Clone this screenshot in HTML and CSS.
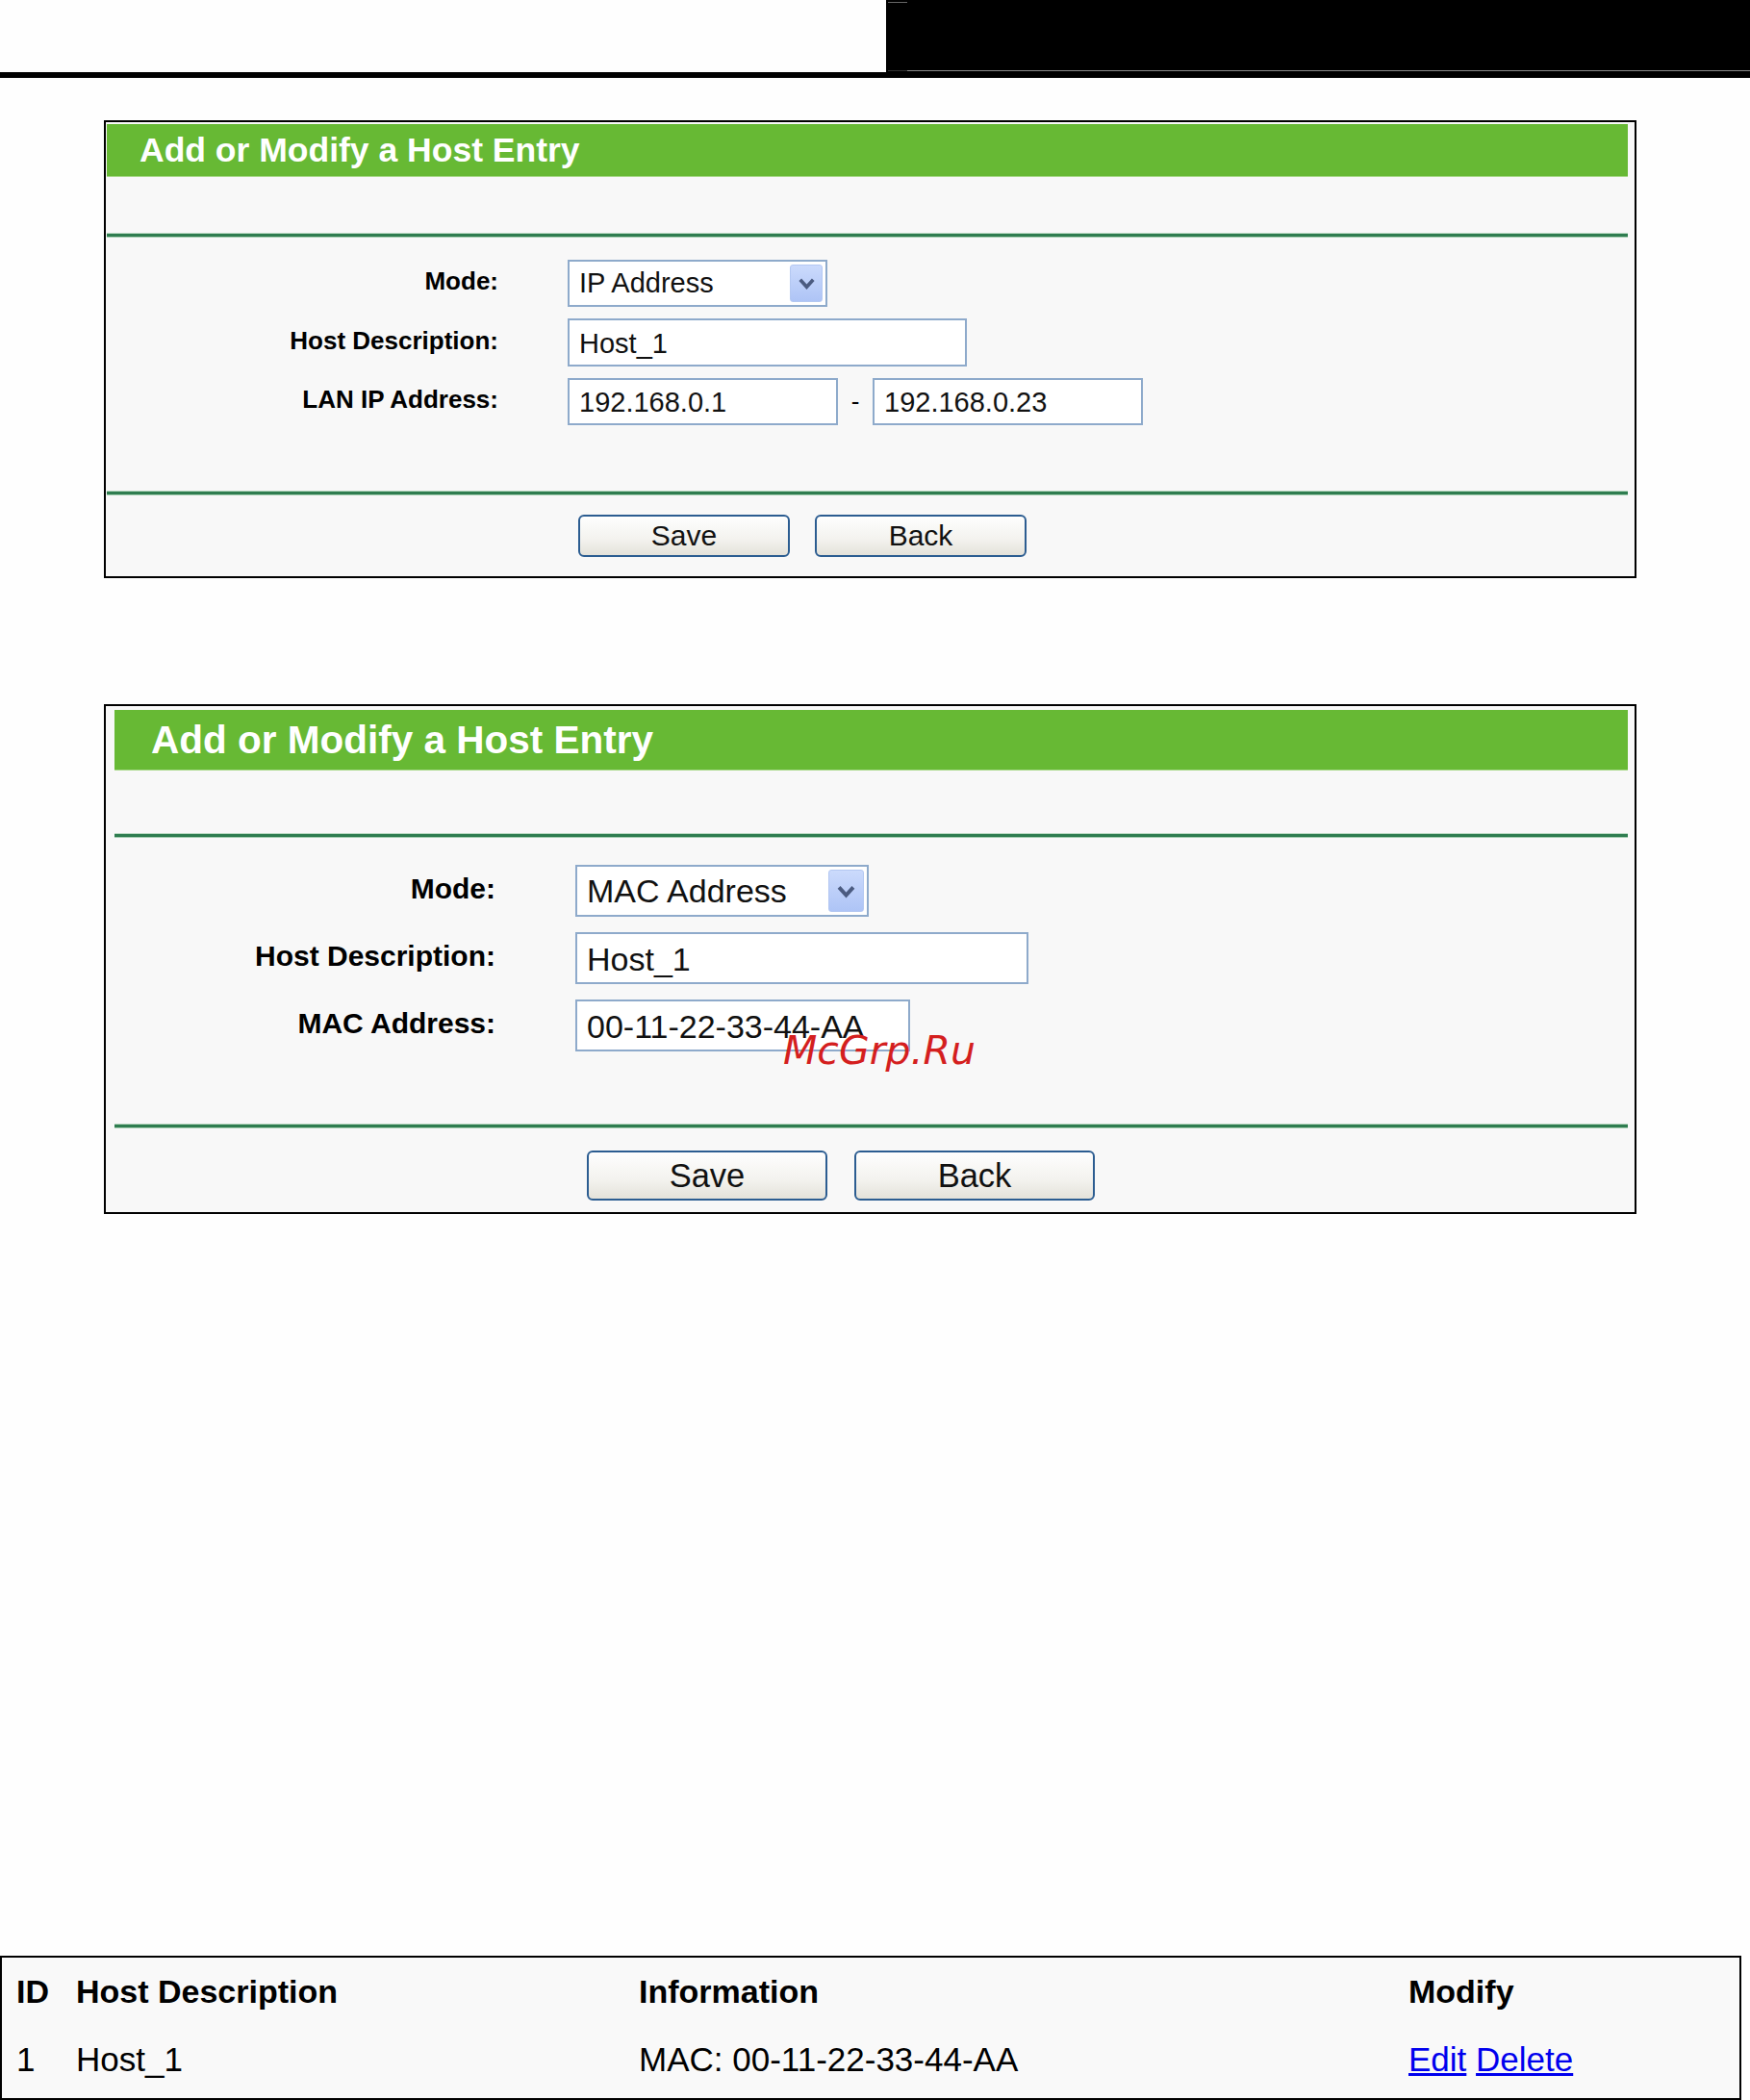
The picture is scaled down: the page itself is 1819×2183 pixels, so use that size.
FILE: index.html
```html
<!DOCTYPE html>
<html lang="en">
<head>
    <meta charset="UTF-8">
    <title>Add or Modify a Host Entry</title>
    <link rel="stylesheet" href="styles.css">
</head>
<body>
    <header class="topbar">
        <div class="topbar-block">
            <span class="topbar-tick"></span>
            <span class="topbar-line"></span>
        </div>
    </header>

    <!-- IP address mode -->
    <section class="panel panel-ip">
        <h2 class="panel-title">Add or Modify a Host Entry</h2>
        <div class="rule rule-top"></div>
        <div class="form-grid">
            <label>Mode:</label>
            <div class="select select-ip">
                <span>IP Address</span>
                <span class="select-btn">
                    <svg viewBox="0 0 14 14" width="21" height="21"><path d="M2.5 4.5 L7 9.5 L11.5 4.5" fill="none" stroke="#4b5b80" stroke-width="2.4"/></svg>
                </span>
            </div>
            <label>Host Description:</label>
            <div><input class="field host-ip" type="text" value="Host_1"></div>
            <label>LAN IP Address:</label>
            <div class="range">
                <input class="field ip" type="text" value="192.168.0.1">
                <span class="dash">-</span>
                <input class="field ip" type="text" value="192.168.0.23">
            </div>
        </div>
        <div class="rule rule-bottom"></div>
        <div class="buttons">
            <button type="button">Save</button>
            <button type="button">Back</button>
        </div>
    </section>

    <!-- MAC address mode -->
    <section class="panel panel-mac">
        <h2 class="panel-title">Add or Modify a Host Entry</h2>
        <div class="rule rule-top"></div>
        <div class="form-grid">
            <label>Mode:</label>
            <div class="select select-mac">
                <span>MAC Address</span>
                <span class="select-btn">
                    <svg viewBox="0 0 14 14" width="23" height="23"><path d="M2.5 4.5 L7 9.5 L11.5 4.5" fill="none" stroke="#4b5b80" stroke-width="2.4"/></svg>
                </span>
            </div>
            <label>Host Description:</label>
            <div><input class="field host-mac" type="text" value="Host_1"></div>
            <label>MAC Address:</label>
            <div><input class="field mac" type="text" value="00-11-22-33-44-AA"></div>
        </div>
        <div class="rule rule-bottom"></div>
        <div class="buttons">
            <button type="button">Save</button>
            <button type="button">Back</button>
        </div>
        <span class="watermark">McGrp.Ru</span>
    </section>

    <!-- Host list -->
    <table class="hosts">
        <colgroup>
            <col class="c-id">
            <col class="c-desc">
            <col class="c-info">
            <col>
        </colgroup>
        <thead>
            <tr>
                <th>ID</th>
                <th>Host Description</th>
                <th>Information</th>
                <th>Modify</th>
            </tr>
        </thead>
        <tbody>
            <tr>
                <td>1</td>
                <td>Host_1</td>
                <td>MAC: 00-11-22-33-44-AA</td>
                <td><a href="#">Edit</a> <a href="#">Delete</a></td>
            </tr>
        </tbody>
    </table>
</body>
</html>
```

FILE: styles.css
```css
/* General styling */
body {
    margin: 0;
    background-color: #fefefe;
    font-family: "Liberation Sans", Arial, sans-serif;
    color: #000;
}

/* Top bar */
.topbar {
    display: flex;
    height: 75px;
    border-bottom: 6px solid #000;
}

.topbar-block {
    flex: 1;
    margin-left: 921px;
    background-color: #000;
    display: flex;
    flex-direction: column;
    justify-content: space-between;
    padding: 2px 0 1px 2px;
}

.topbar-tick {
    width: 20px;
    height: 1px;
    background-color: #666;
}

.topbar-line {
    height: 1px;
    background: linear-gradient(to right, #333 20px, #8a8a8a 20px);
}

/* Panels */
.panel {
    position: relative;
    box-sizing: border-box;
    width: 1593px;
    margin-left: 108px;
    border: 2px solid #000;
    background-color: #f8f8f8;
}

.panel-ip {
    margin-top: 44px;
    padding: 2px 7px 20px 1px;
}

.panel-mac {
    margin-top: 131px;
    padding: 4px 7px 12px 9px;
}

.panel-title {
    display: flex;
    align-items: center;
    margin: 0;
    background-color: #67b934;
    color: #fff;
    font-weight: bold;
    box-shadow: 0 1px 0 #a9d98a;
}

.panel-ip .panel-title {
    height: 54px;
    padding-left: 34px;
    font-size: 35.5px;
}

.panel-mac .panel-title {
    height: 62px;
    padding-left: 38px;
    font-size: 40.5px;
}

.rule {
    height: 3px;
    background-color: #2f7d50;
    box-shadow: 0 -1px 0 #b9d9c2, 0 1px 0 #a7cfb3;
}

.panel-ip .rule-top { margin-top: 60px; }
.panel-ip .rule-bottom { margin-top: 69px; }
.panel-mac .rule-top { margin-top: 67px; }
.panel-mac .rule-bottom { margin-top: 76px; }

/* Form rows */
.form-grid {
    display: grid;
    align-items: center;
}

.panel-ip .form-grid {
    margin-top: 24px;
    grid-template-columns: 407px 1fr;
    grid-template-rows: 49px 50px 49px;
    column-gap: 72px;
    row-gap: 12px;
    font-size: 29px;
}

.panel-mac .form-grid {
    margin-top: 29px;
    grid-template-columns: 396px 1fr;
    grid-auto-rows: 54px;
    column-gap: 83px;
    row-gap: 16px;
    font-size: 34px;
}

.form-grid label {
    text-align: right;
    font-weight: bold;
    margin-top: -4px;
}

.panel-ip .form-grid label { font-size: 26px; }
.panel-mac .form-grid label { font-size: 30px; }

.form-grid > div {
    height: 100%;
}

.field,
.select {
    box-sizing: border-box;
    height: 100%;
    border: 2px solid #8eaacb;
    background-color: #fff;
    font-family: inherit;
    font-size: inherit;
    color: #111;
    padding: 2px 10px 0;
    margin: 0;
}

.select {
    display: flex;
    align-items: center;
    justify-content: space-between;
    padding: 0 3px 0 10px;
}

.select-ip { width: 270px; }
.select-mac { width: 305px; }

.select-btn {
    display: flex;
    align-items: center;
    justify-content: center;
    box-sizing: border-box;
    height: calc(100% - 6px);
    border: 1px solid #b4c8f2;
    border-radius: 3px;
    background: linear-gradient(#cbdafc, #aec4f6);
}

.select-ip .select-btn { width: 34px; }
.select-mac .select-btn { width: 37px; }

.host-ip { width: 415px; }
.host-mac { width: 471px; }
.mac { width: 348px; }
.ip { width: 281px; }

.range {
    display: flex;
    align-items: center;
}

.dash {
    width: 36px;
    text-align: center;
    font-size: 26px;
}

/* Buttons */
.buttons {
    display: flex;
}

.panel-ip .buttons {
    margin-top: 21px;
    padding-left: 490px;
    gap: 26px;
}

.panel-mac .buttons {
    margin-top: 24px;
    padding-left: 491px;
    gap: 28px;
}

.buttons button {
    border: 2px solid #2c5d91;
    border-radius: 6px;
    background: linear-gradient(#fefefe, #f3f2ee 60%, #e4e2da);
    font-family: inherit;
    color: #111;
    padding: 0;
    cursor: pointer;
}

.panel-ip .buttons button {
    width: 220px;
    height: 44px;
    font-size: 30px;
}

.panel-mac .buttons button {
    width: 250px;
    height: 52px;
    font-size: 34.5px;
}

/* Watermark over the MAC field */
.watermark {
    position: absolute;
    left: 704px;
    top: 338px;
    font-family: "DejaVu Sans", sans-serif;
    font-style: italic;
    font-size: 41px;
    line-height: 40px;
    color: #d41f1f;
}

/* Host list table */
.hosts {
    box-sizing: border-box;
    width: 1810px;
    margin-top: 771px;
    border: 2px solid #000;
    border-collapse: separate;
    border-spacing: 0;
    background-color: #f9f9f9;
    table-layout: fixed;
}

.c-id { width: 77px; }
.c-desc { width: 585px; }
.c-info { width: 800px; }

.hosts th,
.hosts td {
    padding: 0;
    text-align: left;
    white-space: nowrap;
}

.hosts th:first-child,
.hosts td:first-child {
    padding-left: 15px;
}

.hosts th {
    height: 70px;
    font-size: 34px;
    font-weight: bold;
}

.hosts td {
    height: 72px;
    font-size: 35px;
    padding-bottom: 4px;
}

.hosts a {
    color: #0000ee;
    text-decoration: underline;
}
```
